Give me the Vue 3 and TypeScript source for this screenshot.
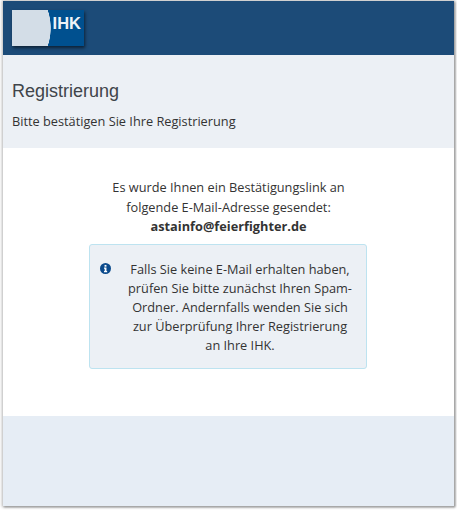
<script setup lang="ts">
const email = 'astainfo@feierfighter.de'
</script>

<template>
  <div class="frame">
    <div class="page">
      <header class="topbar">
        <div class="logo">
          <span class="logo-mark">IHK</span>
        </div>
      </header>
      <section class="title-band">
        <h1>Registrierung</h1>
        <p>Bitte bestätigen Sie Ihre Registrierung</p>
      </section>
      <main class="content">
        <p class="lead">
          Es wurde Ihnen ein Bestätigungslink an<br />
          folgende E-Mail-Adresse gesendet:<br />
          <strong>{{ email }}</strong>
        </p>
        <div class="notice">
          <svg class="info" viewBox="0 0 16 16" aria-hidden="true">
            <circle cx="8" cy="8" r="8" fill="#0b4a8c" />
            <rect x="6.6" y="2.8" width="2.8" height="2.6" fill="#fff" />
            <path d="M5.8 6.6h3.6v5.2h1v1.6H5.8v-1.6h1V8.2h-1z" fill="#fff" />
          </svg>
          <p>
            Falls Sie keine E-Mail erhalten haben, prüfen Sie bitte zunächst Ihren Spam-Ordner.
            Andernfalls wenden Sie sich zur Überprüfung Ihrer Registrierung an Ihre IHK.
          </p>
        </div>
      </main>
      <footer class="foot"></footer>
    </div>
  </div>
</template>

<style>
html, body { margin: 0; background: #fff; }
</style>

<style scoped>
.frame {
  width: 457px;
  height: 511px;
  box-sizing: border-box;
  padding: 1px 3px 5px 3px;
  background: #fff;
  overflow: hidden;
}
.page {
  height: 505px;
  display: flex;
  flex-direction: column;
  box-shadow: 0 0 3px 1px #bbb, 1px 1px 2px 0 #555;
  font-family: "Open Sans", sans-serif;
  font-size: 12.75px;
  color: #333;
}
.topbar {
  height: 54px;
  flex: none;
  background: #1c4b78;
  padding: 9px;
  box-sizing: border-box;
}
.logo {
  width: 72px;
  height: 36px;
  background: radial-gradient(ellipse 37.5px 46px at 1.5px 18px, #d3dde7 98.5%, #00508f 100%);
  box-shadow: 1px 2px 3px rgba(0, 0, 0, 0.55);
  display: flex;
  justify-content: flex-end;
  align-items: flex-start;
}
.logo-mark {
  color: #eef3f8;
  font: 700 16.5px/18px "Liberation Sans", sans-serif;
  margin: 4px 3px 0 0;
}
.title-band {
  height: 93px;
  flex: none;
  background: #ecf0f5;
  padding: 25px 9px 0;
  box-sizing: border-box;
}
.title-band h1 {
  margin: 0;
  font: 400 18px/22px "Liberation Sans", sans-serif;
  color: #40444a;
}
.title-band p {
  margin: 10px 0 0;
  line-height: 18px;
}
.content {
  height: 268px;
  flex: none;
  background: #fff;
  box-sizing: border-box;
  padding-top: 30px;
}
.lead {
  margin: 0;
  text-align: center;
  line-height: 19.5px;
}
.notice {
  width: 278px;
  height: 125px;
  margin: 7px 0 0 86px;
  box-sizing: border-box;
  position: relative;
  padding: 15px 13px 0 37px;
  background: #ecf0f5;
  border: 1px solid #bde3f0;
  border-radius: 3px;
  text-align: center;
  line-height: 19.2px;
}
.notice p { margin: 0; }
.info {
  position: absolute;
  left: 9.5px;
  top: 18px;
  width: 11px;
  height: 11px;
}
.foot {
  flex: 1;
  background: #e6edf5;
}
</style>
